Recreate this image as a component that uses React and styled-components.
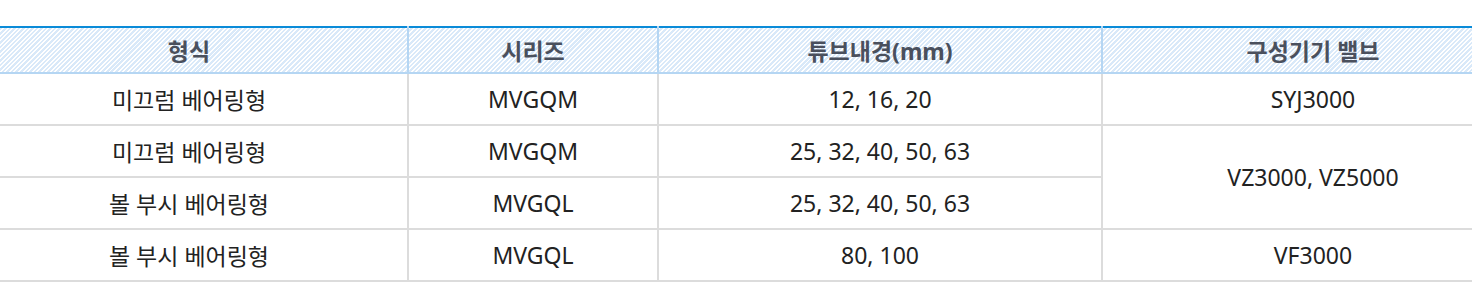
import React from 'react'
import styled, { createGlobalStyle } from 'styled-components'

const GlobalStyle = createGlobalStyle`
  html, body {
    margin: 0;
    padding: 0;
    background: #fff;
  }
  body {
    font-family: "Noto Sans", "Noto Sans CJK KR", sans-serif;
  }
`

// the table is wider than the window: it is cropped on both sides
const Viewport = styled.div`
  padding-top: 26px;
  overflow: hidden;
`

const Table = styled.table`
  width: 1552px;
  margin-left: -29px;
  border-collapse: collapse;
  table-layout: fixed;
  border-top: 2px solid #0a8bd8;
`

const HeadCell = styled.th`
  height: 44px;
  padding: 0;
  font-size: 23px;
  font-weight: 700;
  color: #4a505d;
  text-align: center;
  vertical-align: middle;
  border-bottom: 2px solid #b5d6f3;
  border-left: 2px solid #b5d6f3;
  background: repeating-linear-gradient(
    135deg,
    #ffffff 0 1.4px,
    #d9e9f9 1.4px 3.2px
  );
  &:first-child {
    border-left: none;
  }
`

const Cell = styled.td`
  height: 50px;
  padding: 0;
  font-size: 23px;
  color: #222;
  text-align: center;
  vertical-align: middle;
  border-bottom: 2px solid #dcdcdc;
  border-left: ${p => (p.$first ? 'none' : '2px solid #dcdcdc')};
`

const columns = [
  { title: '형식', width: 437 },
  { title: '시리즈', width: 250 },
  { title: '튜브내경(mm)', width: 444 },
  { title: '구성기기 밸브', width: 421 },
]

const rows = [
  { type: '미끄럼 베어링형', series: 'MVGQM', bore: '12, 16, 20', valve: 'SYJ3000' },
  { type: '미끄럼 베어링형', series: 'MVGQM', bore: '25, 32, 40, 50, 63', valve: 'VZ3000, VZ5000', span: 2 },
  { type: '볼 부시 베어링형', series: 'MVGQL', bore: '25, 32, 40, 50, 63', valve: null },
  { type: '볼 부시 베어링형', series: 'MVGQL', bore: '80, 100', valve: 'VF3000' },
]

export default function App() {
  return (
    <>
      <GlobalStyle />
      <Viewport>
        <Table>
          <colgroup>
            {columns.map(c => (
              <col key={c.title} style={{ width: c.width }} />
            ))}
          </colgroup>
          <thead>
            <tr>
              {columns.map(c => (
                <HeadCell key={c.title}>{c.title}</HeadCell>
              ))}
            </tr>
          </thead>
          <tbody>
            {rows.map((r, i) => (
              <tr key={i}>
                <Cell $first>{r.type}</Cell>
                <Cell>{r.series}</Cell>
                <Cell>{r.bore}</Cell>
                {r.valve && <Cell rowSpan={r.span || 1}>{r.valve}</Cell>}
              </tr>
            ))}
          </tbody>
        </Table>
      </Viewport>
    </>
  )
}
